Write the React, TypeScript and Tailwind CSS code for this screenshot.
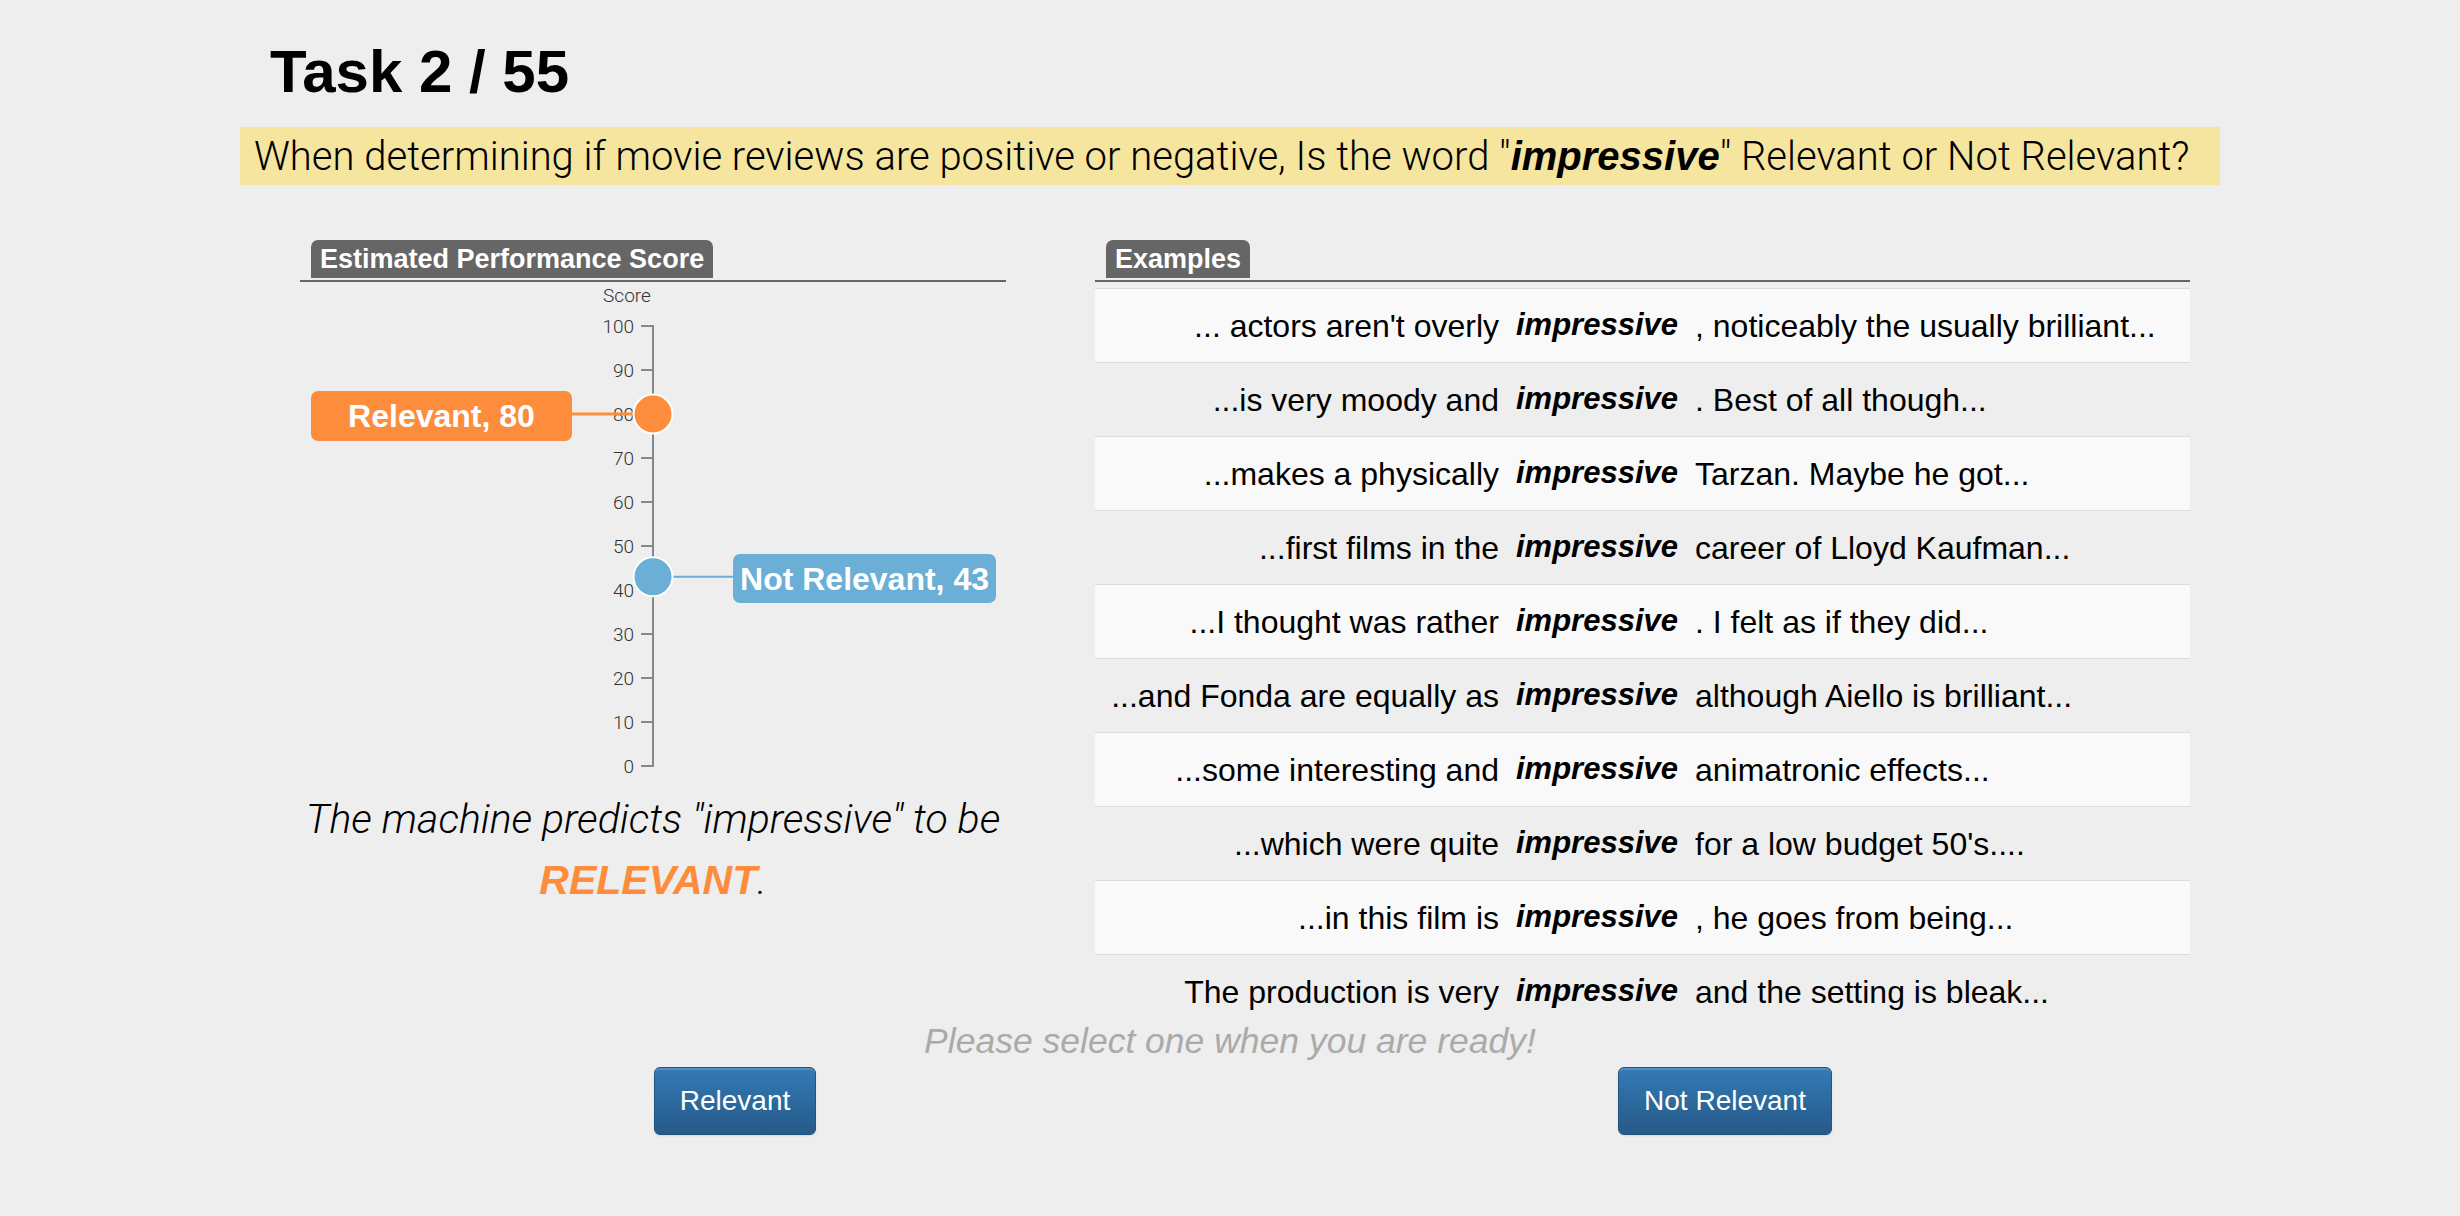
import React from 'react';

const examples: [string, string][] = [
  ["... actors aren't overly", ', noticeably the usually brilliant...'],
  ['...is very moody and', '. Best of all though...'],
  ['...makes a physically', 'Tarzan. Maybe he got...'],
  ['...first films in the', 'career of Lloyd Kaufman...'],
  ['...I thought was rather', '. I felt as if they did...'],
  ['...and Fonda are equally as', 'although Aiello is brilliant...'],
  ['...some interesting and', 'animatronic effects...'],
  ['...which were quite', "for a low budget 50's...."],
  ['...in this film is', ', he goes from being...'],
  ['The production is very', 'and the setting is bleak...'],
];

const ticks = [100, 90, 80, 70, 60, 50, 40, 30, 20, 10, 0];

// y position of a score on the axis
const yOf = (v: number) => 484 - v * 4.4;

function ScoreChart() {
  return (
    <svg width={706} height={500} className="block">
      <text x={327} y={20} textAnchor="middle" fontSize={19} fill="#333" fontFamily="Roboto, 'Liberation Sans', sans-serif" fontWeight={300}>
        Score
      </text>
      <path d="M341,44H353V484H341" fill="none" stroke="#888" strokeWidth={2} />
      {ticks.map((t) => (
        <g key={t}>
          <line x1={341} x2={353} y1={yOf(t)} y2={yOf(t)} stroke="#888" strokeWidth={2} />
          <text x={334} y={yOf(t) + 7} textAnchor="end" fontSize={19} fill="#333" fontFamily="Roboto, 'Liberation Sans', sans-serif" fontWeight={300}>
            {t}
          </text>
        </g>
      ))}

      {/* relevant */}
      <line x1={272} x2={340} y1={yOf(80)} y2={yOf(80)} stroke="#fd8d3c" strokeWidth={3} />
      <rect x={11} y={109} width={261} height={50} rx={7} fill="#fd8d3c" />
      <text x={141.5} y={145} textAnchor="middle" fontSize={32} fontWeight={700} fill="#fff" fontFamily="'Liberation Sans', Arial, sans-serif">
        Relevant, 80
      </text>
      <circle cx={353} cy={yOf(80)} r={19.5} fill="#fd8d3c" stroke="#fff" strokeWidth={2} />

      {/* not relevant */}
      <line x1={366} x2={433} y1={yOf(43)} y2={yOf(43)} stroke="#6baed6" strokeWidth={2} />
      <rect x={433} y={272} width={263} height={49} rx={7} fill="#6baed6" />
      <text x={564.5} y={308} textAnchor="middle" fontSize={32} fontWeight={700} fill="#fff" fontFamily="'Liberation Sans', Arial, sans-serif">
        Not Relevant, 43
      </text>
      <circle cx={353} cy={yOf(43)} r={19.5} fill="#6baed6" stroke="#fff" strokeWidth={2} />
    </svg>
  );
}

function PanelHeader({ title }: { title: string }) {
  return (
    <div>
      <div className="ml-[11px] mb-[2px] inline-flex h-[38px] items-center rounded-t-[7px] bg-[#666] px-[9px] text-[27px] font-bold text-white">
        {title}
      </div>
      <div className="h-[2px] bg-[#666]" />
    </div>
  );
}

export default function App() {
  return (
    <div className="min-h-screen bg-[#eeeeee] font-['Liberation_Sans',Arial,sans-serif] text-black">
      <div className="mx-auto w-[1980px] pt-[42px]">
        <h1 className="ml-[30px] text-[60px] font-bold leading-none">Task 2 / 55</h1>

        <div className="mt-[25px] flex h-[58px] items-center bg-[#f6e59e] px-[14px] font-['Roboto','Liberation_Sans',sans-serif] text-[40px] font-light whitespace-nowrap">
          <span>
            When determining if movie reviews are positive or negative, Is the word "
            <b className="font-['Liberation_Sans',Arial,sans-serif] font-bold italic">impressive</b>
            " Relevant or Not Relevant?
          </span>
        </div>

        <div className="mt-[55px] flex">
          <div className="ml-[60px] w-[706px]">
            <PanelHeader title="Estimated Performance Score" />
            <ScoreChart />
            <div className="mt-[7px] text-center font-['Roboto','Liberation_Sans',sans-serif] text-[41px] font-light italic leading-[61px]">
              The machine predicts "impressive" to be
              <br />
              <span className="font-['Liberation_Sans',Arial,sans-serif] font-bold text-[#fd8d3c]">RELEVANT</span>.
            </div>
          </div>

          <div className="ml-[89px] w-[1095px]">
            <PanelHeader title="Examples" />
            <div className="mt-[6px]">
              {examples.map(([left, right], i) => (
                <div
                  key={i}
                  className={`grid h-[74px] grid-cols-[412px_180px_1fr] items-center border-t border-[#dddddd] text-[32px] ${
                    i % 2 === 0 ? 'bg-[#f9f9f9]' : ''
                  }`}
                >
                  <div className="pr-[8px] text-right whitespace-nowrap">{left}</div>
                  <div className="text-center text-[31px] font-bold italic">impressive</div>
                  <div className="pl-[8px] whitespace-nowrap">{right}</div>
                </div>
              ))}
            </div>
          </div>
        </div>

        <p className="-mt-[4px] text-center text-[35.5px] italic leading-none text-[#aaaaaa]">
          Please select one when you are ready!
        </p>

        <div className="mt-[7px] grid grid-cols-2">
          <div className="flex justify-center">
            <button className="h-[68px] w-[162px] rounded-[6px] border border-[#245580] bg-gradient-to-b from-[#337ab7] to-[#265a88] text-[28px] text-white shadow-[inset_0_2px_0_rgba(255,255,255,0.15),0_1px_2px_rgba(0,0,0,0.1)]">
              Relevant
            </button>
          </div>
          <div className="flex justify-center">
            <button className="h-[68px] w-[214px] rounded-[6px] border border-[#245580] bg-gradient-to-b from-[#337ab7] to-[#265a88] text-[28px] text-white shadow-[inset_0_2px_0_rgba(255,255,255,0.15),0_1px_2px_rgba(0,0,0,0.1)]">
              Not Relevant
            </button>
          </div>
        </div>
      </div>
    </div>
  );
}
